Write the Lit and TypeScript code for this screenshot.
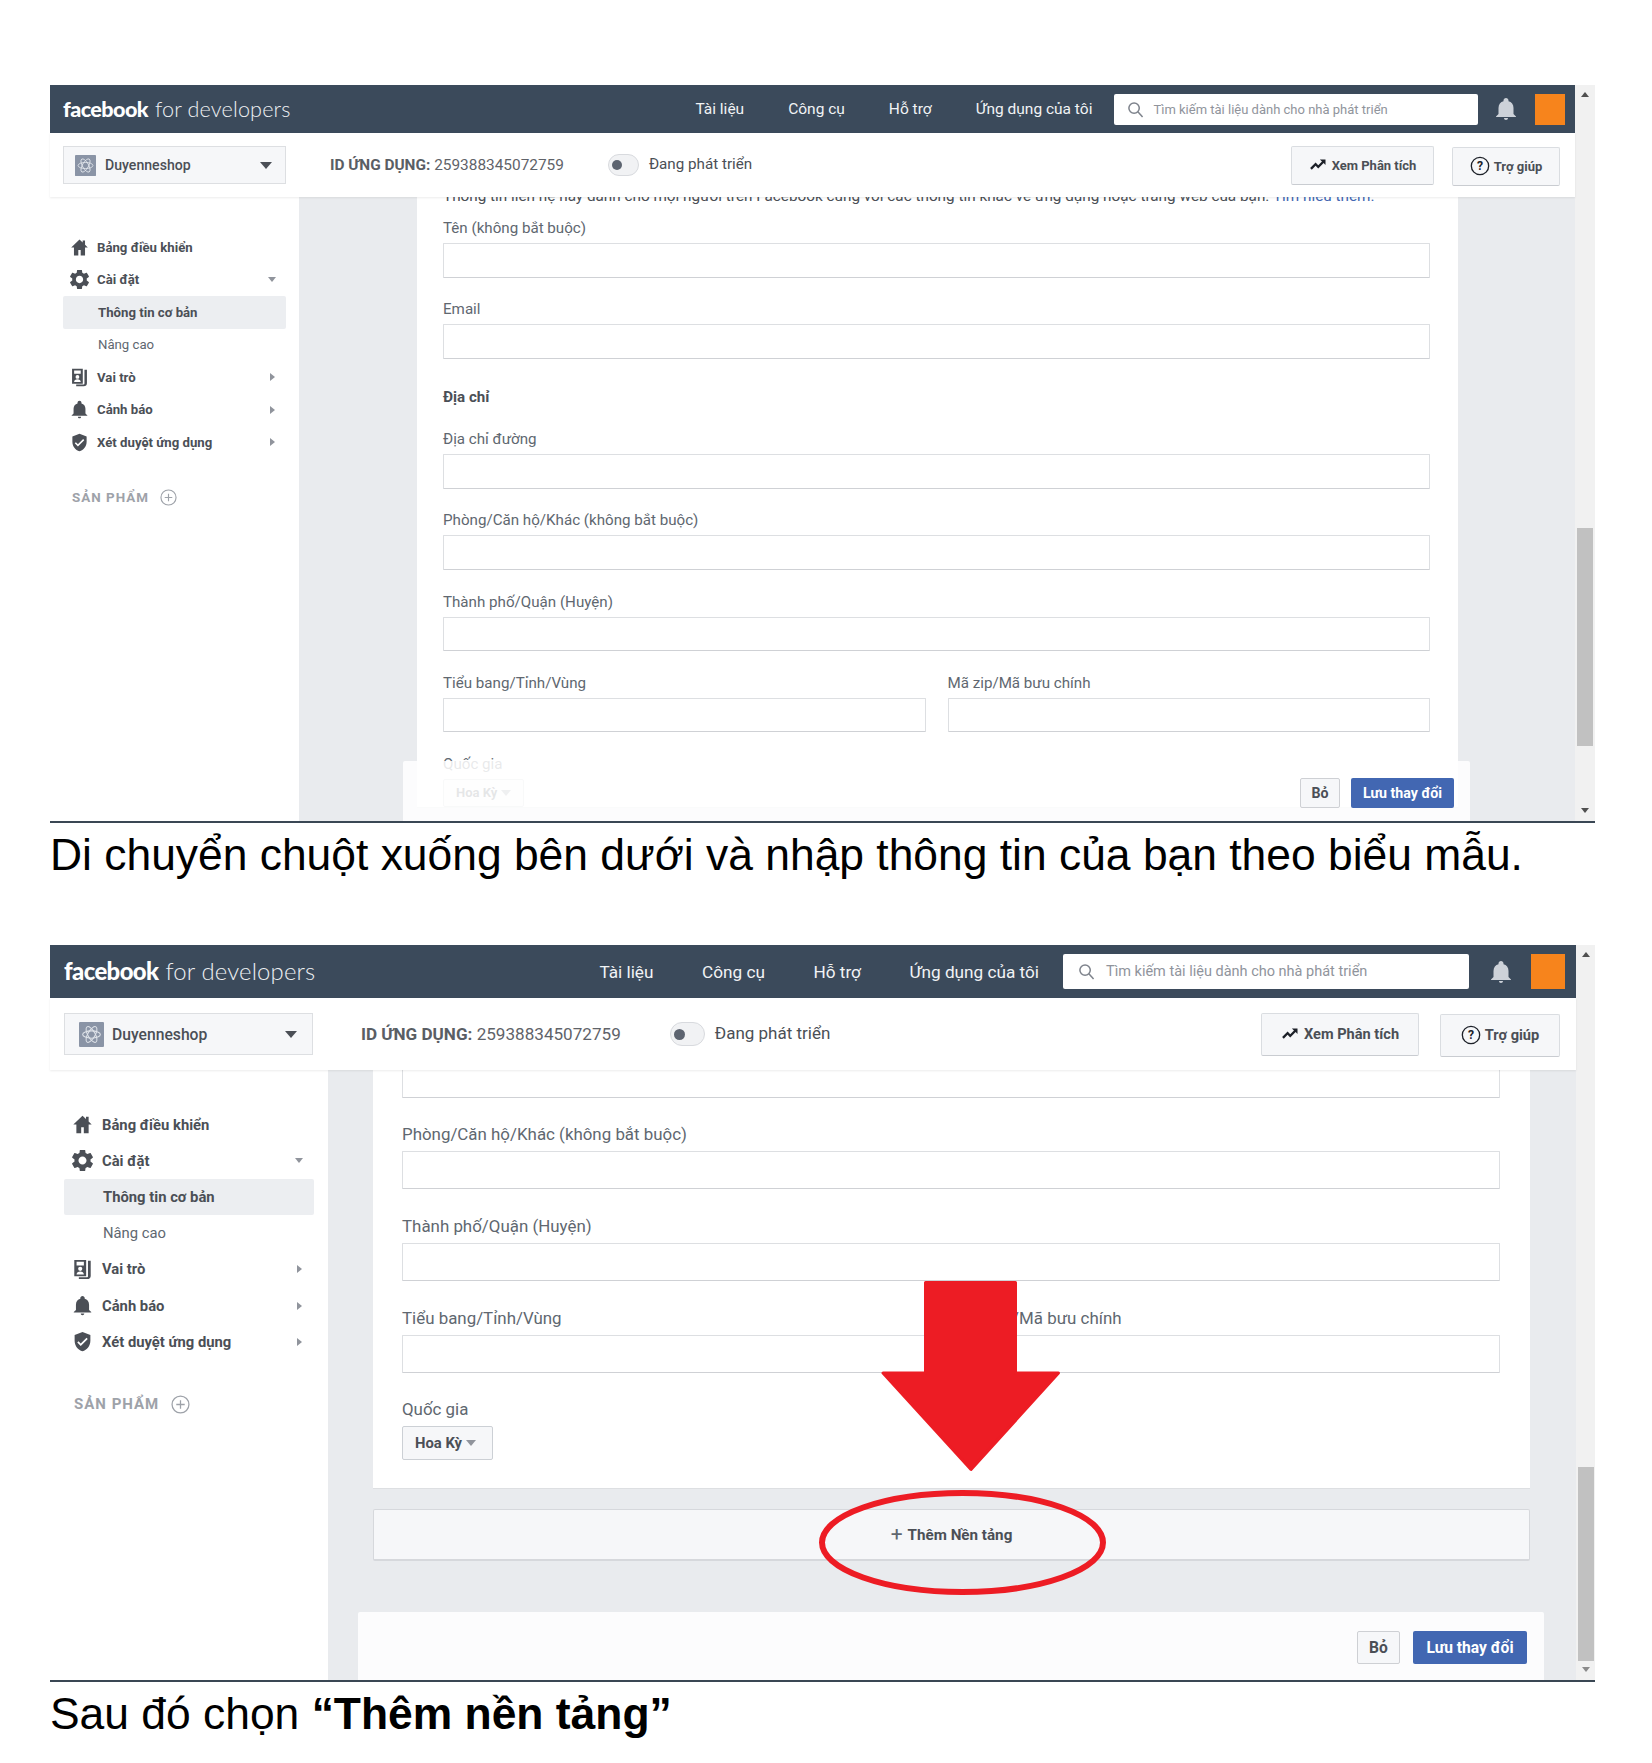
import { LitElement, html, css, svg, nothing } from "lit";
import { customElement, property } from "lit/decorators.js";

const ICONS: Record<string, string> = {
  home: "M12 2 1.5 12H5v10h5.5v-7h3v7H19V12h3.5L19 8.6V3h-3v2.8z",
  gear: "M19.14 12.94c.04-.3.06-.61.06-.94 0-.32-.02-.64-.07-.94l2.03-1.58c.18-.14.23-.41.12-.61l-1.92-3.32c-.12-.22-.37-.29-.59-.22l-2.39.96c-.5-.38-1.03-.7-1.62-.94l-.36-2.54c-.04-.24-.24-.41-.48-.41h-3.84c-.24 0-.43.17-.47.41l-.36 2.54c-.59.24-1.13.57-1.62.94l-2.39-.96c-.22-.08-.47 0-.59.22L2.74 8.87c-.12.21-.08.47.12.61l2.03 1.58c-.05.3-.09.63-.09.94s.02.64.07.94l-2.03 1.58c-.18.14-.23.41-.12.61l1.92 3.32c.12.22.37.29.59.22l2.39-.96c.5.38 1.03.7 1.62.94l.36 2.54c.05.24.24.41.48.41h3.84c.24 0 .44-.17.47-.41l.36-2.54c.59-.24 1.13-.56 1.62-.94l2.39.96c.22.08.47 0 .59-.22l1.92-3.32c.12-.22.07-.47-.12-.61l-2.01-1.58zM12 15.6c-1.98 0-3.6-1.62-3.6-3.6s1.62-3.6 3.6-3.6 3.6 1.62 3.6 3.6-1.62 3.6-3.6 3.6z",
  roles: "M3 2h13v18H3zM5.5 4v4h8V4zM9.500 9.500a2.300 2.300 0 1 0 0 4.600 2.300 2.300 0 0 0 0-4.600zM5.500 18h8c0-2.400-1.800-3.400-4-3.400s-4 1-4 3.400zM18 3h3v16.500c0 2.200-1.400 3.500-4 3.500H8v-2h9c.7 0 1-.4 1-1.200z",
  bell: "M12 23c1.200 0 2-.8 2-2h-4c0 1.200.8 2 2 2zm7.500-6v-6c0-3.500-2-6-5-6.700V3.500C14.500 2.100 13.400 1 12 1S9.500 2.100 9.500 3.500v.8c-3 .7-5 3.200-5 6.700v6L2 19.500V20h20v-.5z",
  shield: "M12 1 3 4.500v6.500c0 5.550 3.840 10.740 9 12 5.160-1.260 9-6.450 9-12V4.500zm-2 16-4-4 1.410-1.410L10 14.170l6.590-6.590L18 9z",
  trend: "M14.500 4.500l2.800 2.800-5 5-3.500-3.500L1.500 16l2.200 2.200 5.100-5.100 3.500 3.500 7.200-7.200 2.500 2.500V4.500z",
};

const VIEWBOX: Record<string, string> = {
  gear: "2.600 2.600 18.800 18.800",
  roles: "1.500 1 21 23",
};

const icon = (name: string) =>
  svg`<svg class="ico" viewBox=${VIEWBOX[name] ?? "0 0 24 24"}><path fill-rule="evenodd" d=${ICONS[name]}></path></svg>`;

type Field = { label: string } | { heading: string } | { stub: true } | { pair: [string, string] };

const INTRO =
  "Thông tin liên hệ này dành cho mọi người trên Facebook cùng với các thông tin khác về ứng dụng hoặc trang web của bạn. ";

const COMMON: Field[] = [
  { label: "Phòng/Căn hộ/Khác (không bắt buộc)" },
  { label: "Thành phố/Quận (Huyện)" },
  { pair: ["Tiểu bang/Tỉnh/Vùng", "Mã zip/Mã bưu chính"] },
];

const FIELDS_A: Field[] = [
  { label: "Tên (không bắt buộc)" },
  { label: "Email" },
  { heading: "Địa chỉ" },
  { label: "Địa chỉ đường" },
  ...COMMON,
];
const FIELDS_B: Field[] = [{ stub: true }, ...COMMON];

const NAV = [
  { icon: "home", text: "Bảng điều khiển" },
  { icon: "gear", text: "Cài đặt", caret: "down" },
  { sub: true, active: true, text: "Thông tin cơ bản" },
  { sub: true, text: "Nâng cao" },
  { icon: "roles", text: "Vai trò", caret: "right" },
  { icon: "bell", text: "Cảnh báo", caret: "right" },
  { icon: "shield", text: "Xét duyệt ứng dụng", caret: "right" },
] as { icon?: string; text: string; caret?: string; sub?: boolean; active?: boolean }[];

@customElement("fb-frame")
export class FbFrame extends LitElement {
  @property() variant: "a" | "b" = "a";

  static styles = css`
    :host { display: block; }
    * { box-sizing: border-box; }
    .frame {
      position: relative;
      margin-left: 50px;
      width: 1545px;
      height: var(--frame-h);
      display: flex;
      border-bottom: 2px solid #3a4754;
      font-family: Roboto, "Noto Sans", sans-serif;
      color: #4b4f56;
      background: #fff;
    }
    .a {
      --frame-h: 738px; --main-w: 1525px; --header-h: 48px; --sub-h: 64px; --logo-l: 13px; --logo-y: 0px;
      --side-w: 249px; --side-pad: 13px; --dd-w: 223px; --dd-h: 38px; --dd-pl: 11px; --dd-pr: 13px; --ico-mr: 9px;
      --logo: 21.600px; --nav-gap: 44px; --nav-font: 15.500px; --search-w: 364px; --search-h: 31px;
      --search-font: 13px; --search-ml: 22px; --search-pl: 13px; --search-gap: 9px; --bell-ml: 15.600px; --orange-w: 30px; --orange-ml: 17px; --header-pr: 10px;
      --id-font: 15.400px; --id-ml: 44px; --tog-ml: 44px; --tog-w: 31px; --tog-h: 22px; --tog-dot: 10px;
      --status-font: 15.200px; --status-ml: 10px; --btn-h: 39px; --btn-font: 13px; --btn1-w: 143px; --btn2-w: 108px; --btn-gap: 18px; --sub-pr: 15px;
      --row-h: 32.500px; --nav-top: 34px; --row-font: 13.200px; --ic: 19px; --ic-l: 7px; --txt-l: 8px; --sub-l: 35px;
      --caret-r: 10px; --prod-top: 30.400px; --prod-l: 9px; --prod-font: 13.400px; --plus: 17px; --plus-ml: 11px;
      --card-l: 118px; --card-w: 1041px; --card-px: 26px; --card-pr: 28px; --field-gap: 21.700px; --label-h: 18px; --label-lh: 20px; --label-gap: 7px;
      --label-font: 15.150px; --input-h: 34.500px; --pair-gap: 22px; --pick-w: 81px; --pick-h: 28px; --pick-font: 13px;
      --foot-l: 353px; --foot-r: 105px; --foot-h: 60px; --foot-gap: 11px; --foot-pr: 16px; --cancel-w: 40px; --save-w: 103px; --foot-btn-h: 30px; --foot-font: 14.200px;
      --add-font: 15px;
      --sb-w: 20px; --thumb-top: 443px; --thumb-h: 218px;
    }
    .b {
      --frame-h: 737px; --main-w: 1526px; --header-h: 53px; --sub-h: 72px; --logo-l: 14px; --logo-y: -2px;
      --side-w: 278px; --side-pad: 14px; --dd-w: 249px; --dd-h: 42px; --dd-pl: 14px; --dd-pr: 15px; --ico-mr: 8px;
      --logo: 23.900px; --nav-gap: 48.600px; --nav-font: 17.200px; --search-w: 406px; --search-h: 35px;
      --search-font: 14.500px; --search-ml: 24px; --search-pl: 15px; --search-gap: 11px; --bell-ml: 20px; --orange-w: 34px; --orange-ml: 18px; --header-pr: 11px;
      --id-font: 17.100px; --id-ml: 48px; --tog-ml: 49px; --tog-w: 35px; --tog-h: 24px; --tog-dot: 11px;
      --status-font: 17px; --status-ml: 10px; --btn-h: 43px; --btn-font: 14.600px; --btn1-w: 158px; --btn2-w: 120px; --btn-gap: 21px; --sub-pr: 16px;
      --row-h: 36.200px; --nav-top: 36.500px; --row-font: 14.800px; --ic: 21px; --ic-l: 8px; --txt-l: 9px; --sub-l: 39px;
      --caret-r: 11px; --prod-top: 35px; --prod-l: 10px; --prod-font: 15px; --plus: 19px; --plus-ml: 12px;
      --card-l: 45px; --card-w: 1157px; --card-px: 29px; --card-pr: 30px; --field-gap: 26.700px; --label-h: 20px; --label-lh: 20px; --label-gap: 7px;
      --label-font: 16.900px; --input-h: 38px; --pair-gap: 22px; --pick-w: 91px; --pick-h: 34px; --pick-font: 14.800px;
      --foot-l: 308px; --foot-r: 32px; --foot-h: 68px; --foot-gap: 13px; --foot-pr: 17px; --cancel-w: 43px; --save-w: 114px; --foot-btn-h: 33px; --foot-font: 15.600px;
      --add-font: 15.200px;
      --sb-w: 19px; --thumb-top: 522px; --thumb-h: 194px;
    }
    .main { width: var(--main-w); display: flex; flex-direction: column; min-height: 0; }

    /* header */
    .header {
      height: var(--header-h); flex: none; background: #3b4a5b; display: flex; align-items: center;
      padding: 0 var(--header-pr) 0 var(--logo-l); color: #fff;
    }
    .logo { font-size: var(--logo); white-space: nowrap; letter-spacing: -0.2px; margin-top: var(--logo-y); }
    .logo b { font-family: Lato, Roboto, sans-serif; font-weight: 900; letter-spacing: -0.6px; margin-right: 7px; }
    .logo span { font-family: Lato, Roboto, sans-serif; font-weight: 300; color: #eef0f3; letter-spacing: .15px; }
    .topnav { margin-left: auto; display: flex; gap: var(--nav-gap); font-size: var(--nav-font); color: #f1f3f5; white-space: nowrap; }
    .search {
      margin-left: var(--search-ml); width: var(--search-w); height: var(--search-h); flex: none; background: #fff; border-radius: 2px;
      display: flex; align-items: center; gap: var(--search-gap); padding-left: var(--search-pl); color: #90949c; font-size: var(--search-font); white-space: nowrap;
    }
    .search svg { width: 17px; height: 17px; flex: none; fill: none; stroke: #7e838c; stroke-width: 1.600; }
    .hbell { margin-left: var(--bell-ml); flex: none; width: 24px; height: 24px; fill: #cdd2d9; }
    .orange { margin-left: var(--orange-ml); flex: none; width: var(--orange-w); height: var(--search-h); background: #f7841c; }

    /* sub bar */
    .subbar {
      height: var(--sub-h); flex: none; display: flex; align-items: center; background: #fff; position: relative; z-index: 2;
      box-shadow: 0 1px 2px rgba(0,0,0,.08); padding-right: var(--sub-pr);
    }
    .dd {
      margin-left: var(--side-pad); width: var(--dd-w); height: var(--dd-h); flex: none; background: #f6f7f9; border: 1px solid #dddfe2;
      display: flex; align-items: center; padding: 0 var(--dd-pr) 0 var(--dd-pl); font-size: calc(var(--row-font) + .9px); font-weight: 500; color: #4b4f56;
    }
    .appico { width: calc(var(--dd-h) - 17px); height: calc(var(--dd-h) - 17px); margin-right: var(--ico-mr); flex: none; }
    .dd i { margin-left: auto; width: 0; height: 0; border: 6px solid transparent; border-top: 7px solid #4b4f56; border-bottom: 0; }
    .appid { margin-left: var(--id-ml); margin-top: -1px; font-size: var(--id-font); white-space: nowrap; color: #5f6369; }
    .appid b { font-weight: 700; color: #5a5e64; }
    .toggle {
      margin-left: var(--tog-ml); width: var(--tog-w); height: var(--tog-h); flex: none; border: 1px solid #d8dade; border-radius: 12px;
      background: #f1f2f4; display: flex; align-items: center; padding-left: 3px;
    }
    .toggle i { width: var(--tog-dot); height: var(--tog-dot); border-radius: 50%; background: #5d6470; }
    .status { margin-left: var(--status-ml); margin-top: -2px; font-size: var(--status-font); white-space: nowrap; color: #4b4f56; }
    .btns { margin-left: auto; display: flex; gap: var(--btn-gap); margin-top: 1px; }
    .btn {
      height: var(--btn-h); background: #f6f7f9; border: 1px solid #dadde1; border-radius: 2px; display: flex; align-items: center; justify-content: center;
      gap: 5px; font-size: var(--btn-font); font-weight: 700; color: #4b4f56; white-space: nowrap; border-bottom-color: #c9ccd1;
    }
    .btn.x { width: var(--btn1-w); }
    .btn.h { width: var(--btn2-w); margin-top: 1px; gap: 4px; }
    .btn svg { width: 18px; height: 18px; flex: none; fill: #1d2129; }
    .btn svg.q { width: 20px; height: 20px; fill: none; stroke: #1d2129; stroke-width: 1.200; }
    .btn svg.q text { fill: #1d2129; stroke: none; font: 700 11px Roboto, sans-serif; text-anchor: middle; }

    /* body */
    .body { flex: 1; min-height: 0; display: flex; background: #e9ebee; overflow: hidden; }
    .side { width: var(--side-w); flex: none; background: #fff; padding: var(--nav-top) var(--side-pad) 0; }
    .row {
      height: var(--row-h); display: flex; align-items: center; padding-left: var(--ic-l); font-size: var(--row-font); font-weight: 700; color: #4b4f56; white-space: nowrap;
    }
    .row .ico { width: var(--ic); height: var(--ic); flex: none; fill: #4b4f56; }
    .row span { margin-left: var(--txt-l); }
    .row.sub { padding-left: var(--sub-l); }
    .row.sub span { margin-left: 0; font-weight: 400; color: #606770; }
    .row.active { background: #eceef1; border-radius: 2px; }
    .row.active span { font-weight: 700; color: #4b4f56; }
    .caret { margin-left: auto; margin-right: var(--caret-r); width: 0; height: 0; border-style: solid; border-color: transparent; }
    .caret.down { border-width: 5px 4px 0; border-top-color: #90949c; }
    .caret.right { border-width: 4px 0 4px 5px; border-left-color: #90949c; margin-right: calc(var(--caret-r) + 1px); }
    .prod {
      margin-top: var(--prod-top); padding-left: var(--prod-l); display: flex; align-items: center; font-size: var(--prod-font); font-weight: 700;
      letter-spacing: 1px; color: #9ea2a9; white-space: nowrap;
    }
    .prod svg { margin-left: var(--plus-ml); width: var(--plus); height: var(--plus); fill: none; stroke: #9ea2a9; stroke-width: 1.200; }

    .stage { flex: 1; min-width: 0; padding-left: var(--card-l); }
    .card {
      width: var(--card-w); background: #fff; padding: 0 var(--card-pr) 0 var(--card-px); border-bottom: 1px solid #dddfe2;
    }
    .b .card { padding-bottom: 28px; }
    .intro { margin: -9px 0 14px; font-size: 15.300px; line-height: 16px; color: #4b4f56; white-space: nowrap; }
    .intro a { color: #4267b2; }
    .field { margin-bottom: var(--field-gap); }
    .label { height: var(--label-h); line-height: var(--label-lh); margin-bottom: var(--label-gap); font-size: var(--label-font); color: #606770; white-space: nowrap; }
    .input { height: var(--input-h); background: #fff; border: 1px solid #dddfe2; border-bottom-color: #cfd1d5; border-radius: 1px; }
    .heading { margin: 28.500px 0 24px; height: 18px; line-height: 20px; font-size: var(--label-font); font-weight: 700; color: #4b4f56; }
    .stub { margin-top: -10.500px; }
    .pair { display: grid; grid-template-columns: 1fr 1fr; column-gap: var(--pair-gap); }
    .pick {
      width: var(--pick-w); height: var(--pick-h); background: #f6f7f9; border: 1px solid #ccd0d5; border-radius: 2px; display: flex; align-items: center;
      padding-left: 12px; gap: 4px; font-size: var(--pick-font); font-weight: 700; color: #4b4f56;
    }
    .pick i { width: 0; height: 0; border: 5px solid transparent; border-top: 6px solid #90949c; border-bottom: 0; }
    .add {
      margin-top: 20px; width: var(--card-w); height: 52px; background: #f6f7f9; border: 1px solid #d6d8dc; border-bottom-width: 2px; border-radius: 2px;
      display: flex; align-items: center; justify-content: center; gap: 5px; font-size: var(--add-font); font-weight: 700; color: #4b4f56;
    }
    .add em { font-style: normal; font-weight: 400; font-size: 21px; line-height: 1; color: #606770; }

    .foot {
      position: absolute; left: var(--foot-l); width: calc(var(--main-w) - var(--foot-l) - var(--foot-r)); bottom: 0; height: var(--foot-h);
      background: rgba(255,255,255,.86); display: flex; align-items: center; justify-content: flex-end; gap: var(--foot-gap); padding: 3px var(--foot-pr) 0 0; border-radius: 2px 2px 0 0;
    }
    .fbtn {
      height: var(--foot-btn-h); border-radius: 2px; display: flex; align-items: center; justify-content: center; font-size: var(--foot-font); font-weight: 700;
    }
    .fbtn.c { width: var(--cancel-w); background: #f6f7f9; border: 1px solid #ced0d4; color: #4b4f56; }
    .fbtn.s { width: var(--save-w); background: #4267b2; color: #fff; }

    /* scrollbar */
    .sb { width: var(--sb-w); flex: none; background: #f1f1f1; display: flex; flex-direction: column; align-items: center; position: relative; }
    .thumb { margin-top: var(--thumb-top); height: var(--thumb-h); width: 16px; background: #c1c1c1; }
    .arr { width: 0; height: 0; border: 4px solid transparent; }
    .arr.up { border-top: 0; border-bottom: 5px solid #505050; margin-top: 7px; margin-bottom: -12px; }
    .arr.dn { border-bottom: 0; border-top: 5px solid #8a8a8a; margin-top: auto; margin-bottom: 8px; }
    .a .arr.dn { border-top-color: #505050; }

    .mark { position: absolute; left: 0; top: 0; width: 1545px; height: 737px; pointer-events: none; overflow: visible; }
  `;

  private field(f: Field) {
    if ("heading" in f) return html`<div class="heading">${f.heading}</div>`;
    if ("stub" in f) return html`<div class="field stub"><div class="input"></div></div>`;
    if ("pair" in f)
      return html`<div class="field pair">
        ${f.pair.map((l) => html`<div><div class="label">${l}</div><div class="input"></div></div>`)}
      </div>`;
    return html`<div class="field"><div class="label">${f.label}</div><div class="input"></div></div>`;
  }

  render() {
    const isA = this.variant === "a";
    return html`
      <div class="frame ${this.variant}">
        <div class="main">
          <div class="header">
            <div class="logo"><b>facebook</b><span>for developers</span></div>
            <div class="topnav">
              <span>Tài liệu</span><span>Công cụ</span><span>Hỗ trợ</span><span>Ứng dụng của tôi</span>
            </div>
            <div class="search">
              <svg viewBox="0 0 18 18"><circle cx="7.500" cy="7.500" r="5.500"></circle><path d="m11.500 11.500 5 5.500"></path></svg>
              Tìm kiếm tài liệu dành cho nhà phát triển
            </div>
            <svg class="hbell" viewBox="0 0 24 24"><path d=${ICONS.bell}></path></svg>
            <div class="orange"></div>
          </div>
          <div class="subbar">
            <div class="dd">
              <svg class="appico" viewBox="0 0 24 24">
                <rect width="24" height="24" rx="1" fill="#8a94a6"></rect>
                <g fill="none" stroke="#dfe3e9" stroke-width="1">
                  <ellipse cx="12" cy="12" rx="8.500" ry="3.500"></ellipse>
                  <ellipse cx="12" cy="12" rx="8.500" ry="3.500" transform="rotate(60 12 12)"></ellipse>
                  <ellipse cx="12" cy="12" rx="8.500" ry="3.500" transform="rotate(120 12 12)"></ellipse>
                </g>
              </svg>
              Duyenneshop<i></i>
            </div>
            <div class="appid"><b>ID ỨNG DỤNG:</b> 259388345072759</div>
            <div class="toggle"><i></i></div>
            <div class="status">Đang phát triển</div>
            <div class="btns">
              <div class="btn x">${icon("trend")}Xem Phân tích</div>
              <div class="btn h">
                <svg class="q" viewBox="0 0 18 18"><circle cx="9" cy="9" r="7.800"></circle><text x="9" y="13">?</text></svg>
                Trợ giúp
              </div>
            </div>
          </div>
          <div class="body">
            <div class="side">
              ${NAV.map(
                (n) => html`<div class="row ${n.sub ? "sub" : ""} ${n.active ? "active" : ""}">
                  ${n.icon ? icon(n.icon) : nothing}<span>${n.text}</span>
                  ${n.caret ? html`<i class="caret ${n.caret}"></i>` : nothing}
                </div>`
              )}
              <div class="prod">
                SẢN PHẨM
                <svg viewBox="0 0 18 18"><circle cx="9" cy="9" r="8"></circle><path d="M9 5v8M5 9h8"></path></svg>
              </div>
            </div>
            <div class="stage">
              <div class="card">
                ${isA ? html`<div class="intro">${INTRO}<a>Tìm hiểu thêm.</a></div>` : nothing}
                ${(isA ? FIELDS_A : FIELDS_B).map((f) => this.field(f))}
                <div class="label">Quốc gia</div>
                <div class="pick">Hoa Kỳ<i></i></div>
              </div>
              ${isA ? nothing : html`<div class="add"><em>+</em>Thêm Nền tảng</div>`}
            </div>
          </div>
        </div>
        <div class="sb">
          <i class="arr up"></i>
          <div class="thumb"></div>
          <i class="arr dn"></i>
        </div>
        <div class="foot">
          <div class="fbtn c">Bỏ</div>
          <div class="fbtn s">Lưu thay đổi</div>
        </div>
        ${isA
          ? nothing
          : svg`<svg class="mark" viewBox="0 0 1545 737">
              <path d="M875.500 428V337.500H965.500V428H1008.500L921 524.500L833 428Z" fill="#ed1c24" stroke="#ed1c24" stroke-width="3" stroke-linejoin="round"></path>
              <ellipse cx="912.500" cy="597.500" rx="140.500" ry="49.500" fill="none" stroke="#ed1c24" stroke-width="6"></ellipse>
            </svg>`}
      </div>
    `;
  }
}

@customElement("app-root")
export class AppRoot extends LitElement {
  static styles = css`
    :host { display: block; }
    .page { width: 1652px; height: 1763px; background: #fff; padding-top: 85px; box-sizing: border-box; overflow: hidden; }
    .cap {
      margin-left: 50px; height: 122px; padding-top: 6px; box-sizing: border-box; font-family: "Liberation Sans", Arial, sans-serif;
      font-size: 44.400px; line-height: 52px; color: #000; white-space: nowrap;
    }
    .cap2 { height: auto; }
  `;
  render() {
    return html`
      <div class="page">
        <fb-frame variant="a"></fb-frame>
        <div class="cap">Di chuyển chuột xuống bên dưới và nhập thông tin của bạn theo biểu mẫu.</div>
        <fb-frame variant="b"></fb-frame>
        <div class="cap cap2">Sau đó chọn <b>“Thêm nền tảng”</b></div>
      </div>
    `;
  }
}
